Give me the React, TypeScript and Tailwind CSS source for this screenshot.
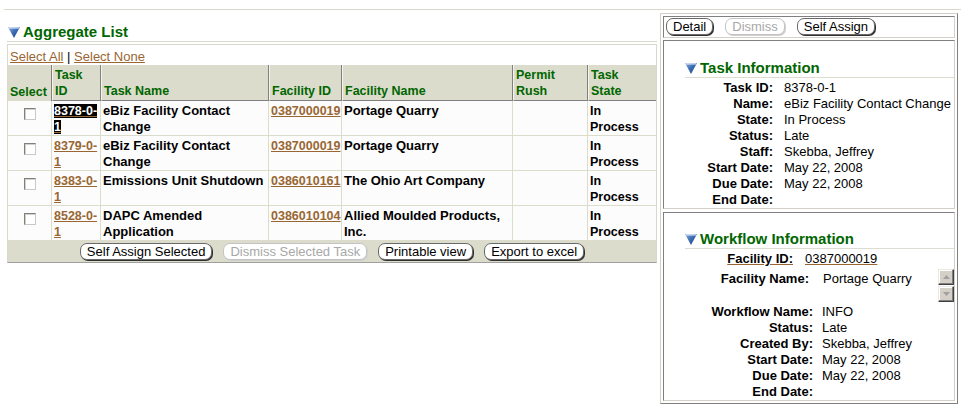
import React from 'react';

function Tri() {
  return (
    <svg width="12" height="11" viewBox="0 0 12 11" className="shrink-0">
      <defs>
        <linearGradient id="triG" x1="0" y1="0" x2="1" y2="1">
          <stop offset="0" stopColor="#8fb2e4" />
          <stop offset="0.45" stopColor="#3f6fb4" />
          <stop offset="1" stopColor="#1a3c7c" />
        </linearGradient>
      </defs>
      <polygon points="0,0 12,0 6,11" fill="url(#triG)" />
      <polygon points="0.5,0.3 11.5,0.3 10.8,1.6 1.2,1.6" fill="#e4edf9" />
    </svg>
  );
}

function Btn({ children, disabled }: { children: React.ReactNode; disabled?: boolean }) {
  return (
    <span
      className={
        disabled
          ? 'inline-flex items-center h-[17px] px-[6px] rounded-[7px] border border-[#c4c4c4] bg-white text-[#a8a8a8] text-[13px] leading-none shadow-[1px_1px_0_#cfcfcf] whitespace-nowrap'
          : 'inline-flex items-center h-[17px] px-[6px] rounded-[7px] border border-[#6a6a6a] bg-white text-black text-[13px] leading-none shadow-[1px_1px_0_#303030] whitespace-nowrap'
      }
    >
      {children}
    </span>
  );
}

function ScrollBtn({ up }: { up?: boolean }) {
  return (
    <div className="w-[16px] h-[16px] bg-[#d4d0c8] border border-t-[#ece9e2] border-l-[#ece9e2] border-r-[#404040] border-b-[#404040] shadow-[inset_-1px_-1px_0_#808080,inset_1px_1px_0_#ffffff] flex items-center justify-center">
      <svg width="7" height="4" viewBox="0 0 7 4">
        {up ? <polygon points="0,4 7,4 3.5,0" fill="#a0a0a0" /> : <polygon points="0,0 7,0 3.5,4" fill="#a0a0a0" />}
      </svg>
    </div>
  );
}

const rows = [
  { id: '8378-0-', sel: true, name: 'eBiz Facility Contact Change', fid: '0387000019', fname: 'Portage Quarry' },
  { id: '8379-0-', sel: false, name: 'eBiz Facility Contact Change', fid: '0387000019', fname: 'Portage Quarry' },
  { id: '8383-0-', sel: false, name: 'Emissions Unit Shutdown', fid: '0386010161', fname: 'The Ohio Art Company' },
  { id: '8528-0-', sel: false, name: 'DAPC Amended Application', fid: '0386010104', fname: 'Allied Moulded Products, Inc.' },
];

const hdr = 'bg-[#dcdccc] border-l border-l-[#f4f4ec] border-r border-r-[#808080] border-b border-b-[#808080] flex flex-col justify-end pl-[2px] pb-[1px] text-[12.5px] font-bold text-[#006600] leading-[16px]';
const cell = 'border-r border-b border-[#dcdccc] pt-[2px] pl-[2px] text-[12.5px] font-bold leading-[16px] text-black';
const nameCell = 'border-r border-b border-[#dcdccc] pt-[2px] pl-[2px] text-[13px] font-bold leading-[16px] text-black';

export default function App() {
  const taskInfo: [string, string][] = [
    ['Task ID:', '8378-0-1'],
    ['Name:', 'eBiz Facility Contact Change'],
    ['State:', 'In Process'],
    ['Status:', 'Late'],
    ['Staff:', 'Skebba, Jeffrey'],
    ['Start Date:', 'May 22, 2008'],
    ['Due Date:', 'May 22, 2008'],
    ['End Date:', ''],
  ];
  const wfInfo: [string, string][] = [
    ['Workflow Name:', 'INFO'],
    ['Status:', 'Late'],
    ['Created By:', 'Skebba, Jeffrey'],
    ['Start Date:', 'May 22, 2008'],
    ['Due Date:', 'May 22, 2008'],
    ['End Date:', ''],
  ];
  return (
    <div className="w-[961px] h-[406px] overflow-hidden bg-white pt-[9px] font-['Liberation_Sans',Arial,sans-serif] text-black">
      <div className="ml-[4px] h-[1px] bg-[#d8d8cc]" />
      <div className="flex items-start">
        {/* Left column */}
        <div className="ml-[7px] w-[650px]">
          <div className="h-[32px] border-b border-[#d8d8cc] flex items-end">
            <div className="flex items-center h-[18px] ml-[1px] gap-[3px]">
              <Tri />
              <span className="text-[15px] font-bold text-[#006600] leading-[18px]">Aggregate List</span>
            </div>
          </div>
          <div className="mt-[2px] border border-[#d8d8cc] border-b-[#a0a0a0]">
            <div className="h-[20px] pt-[4px] pl-[2px] text-[13px] leading-[16px] whitespace-nowrap">
              <a className="text-[#996633] underline">Select All</a> | <a className="text-[#996633] underline">Select None</a>
            </div>
            <div className="grid grid-cols-[44px_49px_168px_73px_171px_75px_68px] h-[36px]">
              <div className="bg-[#dcdccc] border-r border-r-[#808080] flex flex-col justify-end pl-[2px] pb-[1px] text-[12.5px] font-bold text-[#006600] leading-[16px]">Select</div>
              <div className={hdr}><span>Task<br />ID</span></div>
              <div className={hdr}>Task Name</div>
              <div className={hdr}>Facility ID</div>
              <div className={hdr}>Facility Name</div>
              <div className={hdr}><span>Permit<br />Rush</span></div>
              <div className={hdr + ' border-r-0'}><span>Task<br />State</span></div>
            </div>
            {rows.map((r, i) => (
              <div key={i} className="grid grid-cols-[44px_49px_168px_73px_171px_75px_68px] h-[35px] bg-[#fcfcfc]">
                <div className="border-r border-b border-[#dcdccc] flex justify-center pt-[7px]">
                  <span className="block w-[12px] h-[12px] bg-white border border-t-[#808080] border-l-[#808080] border-r-[#c8c8c8] border-b-[#c8c8c8] shadow-[inset_1px_1px_0_#d4d0c8]" />
                </div>
                <div className={cell}>
                  {r.sel ? (
                    <span className="bg-black text-white underline decoration-[#996633]">{r.id}<br />1</span>
                  ) : (
                    <span className="text-[#996633] underline">{r.id}<br />1</span>
                  )}
                </div>
                <div className={nameCell}>{r.name}</div>
                <div className={cell + ' whitespace-nowrap'}>
                  <span className="text-[#996633] underline">{r.fid}</span>
                </div>
                <div className={nameCell}>{r.fname}</div>
                <div className={cell}></div>
                <div className="border-b border-[#dcdccc] pt-[2px] pl-[2px] text-[12.5px] font-bold leading-[16px]">In<br />Process</div>
              </div>
            ))}
            <div className="h-[21px] bg-[#dcdccc] flex justify-center items-start pt-[2px] gap-[11px]">
              <Btn>Self Assign Selected</Btn>
              <Btn disabled>Dismiss Selected Task</Btn>
              <Btn>Printable view</Btn>
              <Btn>Export to excel</Btn>
            </div>
          </div>
        </div>

        {/* Right column */}
        <div className="mt-[3px] ml-[3px] w-[298px] h-[391px] border border-t-[#d4d0c8] border-l-[#d4d0c8] border-r-[#808080] border-b-[#808080] p-[2px] flex flex-col">
          <div className="h-[22px] border border-t-[#808080] border-l-[#808080] border-r-[#d4d0c8] border-b-[#d4d0c8] flex items-start pt-[1px] pl-[2px] gap-[12px]">
            <Btn>Detail</Btn>
            <Btn disabled>Dismiss</Btn>
            <Btn>Self Assign</Btn>
          </div>
          <div className="mt-[2px] h-[169px] border border-t-[#808080] border-l-[#808080] border-r-[#d4d0c8] border-b-[#d4d0c8] pt-[18px]">
            <div className="ml-[21px] h-[19px] border-b border-[#dcdcd0] flex items-center gap-[3px]">
              <Tri />
              <span className="text-[15px] font-bold text-[#006600] leading-[18px]">Task Information</span>
            </div>
            <div className="mt-[2px] grid grid-cols-[109px_auto] gap-x-[11px] text-[13px] leading-[16px] whitespace-nowrap">
              {taskInfo.map(([k, v]) => (
                <React.Fragment key={k}>
                  <div className="text-right font-bold">{k}</div>
                  <div>{v}</div>
                </React.Fragment>
              ))}
            </div>
          </div>
          <div className="mt-[3px] flex-1 border border-t-[#808080] border-l-[#808080] border-r-[#d4d0c8] border-b-[#d4d0c8] pt-[17px]">
            <div className="ml-[21px] h-[19px] border-b border-[#dcdcd0] flex items-center gap-[3px]">
              <Tri />
              <span className="text-[15px] font-bold text-[#006600] leading-[18px]">Workflow Information</span>
            </div>
            <div className="mt-[2px] grid grid-cols-[129px_auto] gap-x-[12px] text-[13px] leading-[16px] whitespace-nowrap">
              <div className="text-right font-bold"><span className="underline decoration-[#996633]">Facility ID:</span></div>
              <div><span className="underline decoration-[#996633]">0387000019</span></div>
            </div>
            <div className="mt-[2px] flex items-start">
              <div className="pt-[2px] grid grid-cols-[145px_auto] gap-x-[14px] text-[13px] leading-[16px] whitespace-nowrap">
                <div className="text-right font-bold">Facility Name:</div>
                <div>Portage Quarry</div>
              </div>
              <div className="ml-auto flex flex-col gap-[1px]">
                <ScrollBtn up />
                <ScrollBtn />
              </div>
            </div>
            <div className="mt-[2px] grid grid-cols-[149px_auto] gap-x-[9px] text-[13px] leading-[16px] whitespace-nowrap">
              {wfInfo.map(([k, v]) => (
                <React.Fragment key={k}>
                  <div className="text-right font-bold">{k}</div>
                  <div>{v}</div>
                </React.Fragment>
              ))}
            </div>
          </div>
        </div>
      </div>
    </div>
  );
}
